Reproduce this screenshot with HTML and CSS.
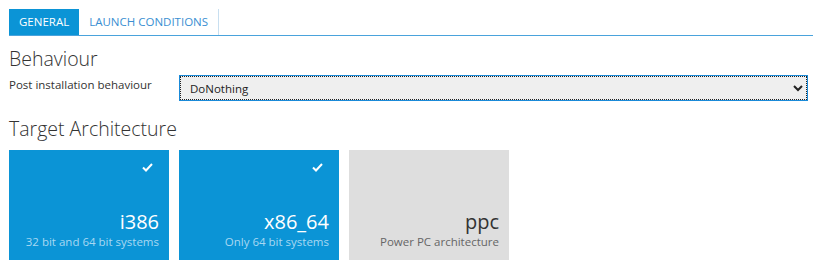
FILE: index.html
```html
<!DOCTYPE html>
<html lang="en">
<head>
    <meta charset="UTF-8">
    <title>Package settings</title>
    <link rel="stylesheet" href="styles.css">
</head>
<body>
    <div class="tabs">
        <div class="tab active">GENERAL</div>
        <div class="tab">LAUNCH CONDITIONS</div>
    </div>

    <!-- Behaviour -->
    <h2>Behaviour</h2>
    <div class="form-row">
        <label for="postInstall">Post installation behaviour</label>
        <div class="select-box">
            <select id="postInstall">
                <option>DoNothing</option>
                <option>Reboot</option>
                <option>Shutdown</option>
            </select>
        </div>
    </div>

    <!-- Architectures -->
    <h2>Target Architecture</h2>
    <div class="tiles">
        <div class="tile selected">
            <svg class="check" width="11" height="9" viewBox="0 0 11 9"><path d="M1 4.5 L4 7.5 L10 1" fill="none" stroke="#fff" stroke-width="2"/></svg>
            <div class="tile-name">i386</div>
            <div class="tile-desc">32 bit and 64 bit systems</div>
        </div>
        <div class="tile selected">
            <svg class="check" width="11" height="9" viewBox="0 0 11 9"><path d="M1 4.5 L4 7.5 L10 1" fill="none" stroke="#fff" stroke-width="2"/></svg>
            <div class="tile-name">x86_64</div>
            <div class="tile-desc">Only 64 bit systems</div>
        </div>
        <div class="tile">
            <div class="tile-name">ppc</div>
            <div class="tile-desc">Power PC architecture</div>
        </div>
    </div>
</body>
</html>
```

FILE: styles.css
```css
body {
    margin: 0;
    padding: 9px 5px 0 9px;
    font-family: "Open Sans", "Noto Sans", sans-serif;
    color: #333;
    background: #fff;
}
.tabs {
    display: flex;
    border-bottom: 1px solid #4aa3dc;
    margin-right: -5px;
}
.tab {
    height: 26px;
    line-height: 26px;
    padding: 0 10px;
    font-size: 11.5px;
    color: #3a8fd2;
    border-right: 1px solid #c8dff0;
}
.tab.active {
    background-color: #0b94d6;
    color: #fff;
    border-right: none;
}
h2 {
    margin: 0;
    font-weight: 300;
    font-size: 19.5px;
    color: #333;
}
h2:first-of-type {
    margin-top: 9px;
}
.form-row {
    display: flex;
    align-items: flex-start;
    margin-top: 3px;
    margin-bottom: 14px;
}
label {
    width: 170px;
    font-size: 11.5px;
    padding-top: 2px;
}
.select-box {
    flex: 1;
    border: 1px solid #1a8ad8;
}
select {
    display: block;
    width: 100%;
    height: 24px;
    margin: 0;
    padding: 0 5px;
    border: 1px dotted #222;
    background-color: #efefef;
    font-family: inherit;
    font-size: 11.5px;
    color: #222;
}
.tiles {
    display: flex;
    gap: 10px;
    margin-top: 8px;
}
.tile {
    position: relative;
    width: 160px;
    height: 110px;
    box-sizing: border-box;
    padding: 0 10px 11px 0;
    background-color: #dedede;
    display: flex;
    flex-direction: column;
    justify-content: flex-end;
    align-items: flex-end;
    color: #333;
}
.tile.selected {
    background-color: #0b94d6;
    color: #fff;
}
.check {
    position: absolute;
    top: 13px;
    right: 16px;
}
.tile-name {
    font-size: 20px;
    line-height: 24px;
}
.tile-desc {
    font-size: 11.5px;
    line-height: 15px;
    color: #666;
}
.tile.selected .tile-desc {
    color: #a8d8f2;
}
```
